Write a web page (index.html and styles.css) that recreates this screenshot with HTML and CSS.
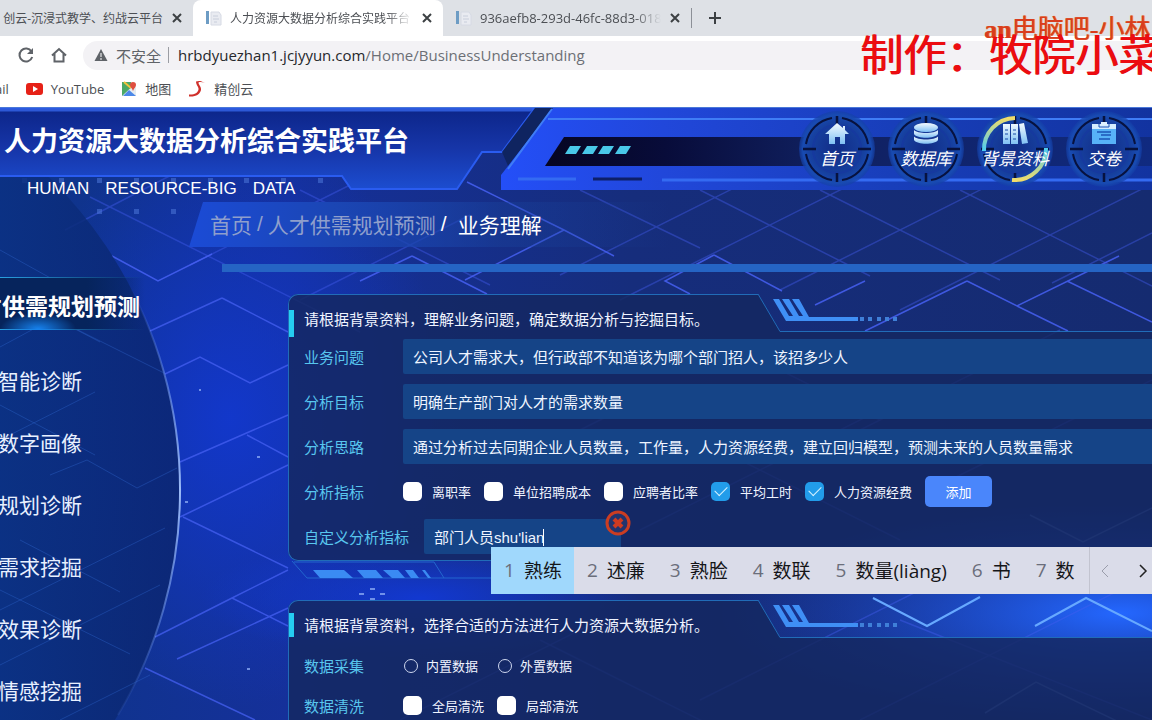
FILE: index.html
```html
<!DOCTYPE html>
<html lang="zh-CN">
<head>
<meta charset="utf-8">
<title>人力资源大数据分析综合实践平台</title>
<link rel="stylesheet" href="styles.css">
</head>
<body>
<svg class="defs" width="0" height="0" aria-hidden="true">
  <defs>
    <symbol id="close" viewBox="0 0 12 12"><path d="M2 2l8 8M10 2l-8 8" stroke="#3c4043" stroke-width="2" fill="none"/></symbol>
    <symbol id="page" viewBox="0 0 16 16"><path d="M0 1h3v13H0z" fill="#6d9cc4"/><path d="M5 2h8l2 3v10H5z" fill="#e9ebf1" stroke="#d6dae4"/><path d="M7 6h5M7 9h6M8 12h3" stroke="#c8cedb"/></symbol>
    <symbol id="target" viewBox="0 0 76 80">
      <circle cx="38" cy="40" r="38" fill="url(#disc)"/>
      <circle cx="38" cy="40" r="24" fill="none" stroke="#16399f" stroke-width="2"/>
      <g fill="none" stroke="#07123f" stroke-width="2">
        <path d="M43 9A31.500 31.500 0 0 1 69 35M69 45A31.500 31.500 0 0 1 43 71M33 71A31.500 31.500 0 0 1 7 45M7 35A31.500 31.500 0 0 1 33 9"/>
        <path d="M38 7v9M38 64v9M4 40h13M59 40h13" stroke-width="2.500"/>
      </g>
    </symbol>
    <radialGradient id="disc"><stop offset="0" stop-color="#122c86"/><stop offset=".7" stop-color="#16409f"/><stop offset=".9" stop-color="#184bb2"/><stop offset="1" stop-color="#1440a8" stop-opacity=".6"/></radialGradient>
    <linearGradient id="ice" x2="0" y2="1"><stop stop-color="#f4fbff"/><stop offset="1" stop-color="#7fc0f4"/></linearGradient>
    <linearGradient id="left" x2="0" y2="1"><stop stop-color="#0c2588"/><stop offset=".5" stop-color="#1635a8"/><stop offset="1" stop-color="#1c4dd0"/></linearGradient>
    <linearGradient id="right" gradientUnits="userSpaceOnUse" x1="501" y1="0" x2="1152" y2="0"><stop stop-color="#244ff8"/><stop offset=".25" stop-color="#2147da"/><stop offset=".6" stop-color="#183eba"/><stop offset="1" stop-color="#1233a0"/></linearGradient>
    <linearGradient id="slot" gradientUnits="userSpaceOnUse" x1="545" y1="0" x2="1152" y2="0"><stop stop-color="#060522"/><stop offset=".2" stop-color="#080c3a"/><stop offset=".45" stop-color="#10205f"/><stop offset="1" stop-color="#102a80"/></linearGradient>
    <linearGradient id="side"><stop stop-color="#0b3c91"/><stop offset=".75" stop-color="#0b3388"/><stop offset="1" stop-color="#0b256e"/></linearGradient>
    <linearGradient id="arc" x2="0" y2="1"><stop offset=".05" stop-color="#79a4ff" stop-opacity="0"/><stop offset=".5" stop-color="#9dbcf8"/><stop offset=".95" stop-color="#79a4ff" stop-opacity=".1"/></linearGradient>
    <radialGradient id="glow"><stop stop-color="#1238d0"/><stop offset="1" stop-color="#1238d0" stop-opacity="0"/></radialGradient>
    <radialGradient id="glow2"><stop stop-color="#2467ff"/><stop offset="1" stop-color="#1b4be0" stop-opacity="0"/></radialGradient>
    <linearGradient id="ring" x2="0" y2="1"><stop stop-color="#f0dc6a"/><stop offset="1" stop-color="#49cdf6"/></linearGradient>
    <linearGradient id="ring2" x2="0" y2="1"><stop stop-color="#49cdf6"/><stop offset="1" stop-color="#f0dc6a"/></linearGradient>
    <symbol id="claws" viewBox="0 0 900 40">
      <path d="M470 0l22 37.500H900" fill="none" stroke="#216cb8"/>
      <path d="M485 5h6l10 17h4L494 5h7l10 17h4L504 5h7l10 18h49v4h-72z" fill="#3f8ff5"/>
      <path d="M572 23h4v4h-4zM580 23h4v4h-4zM589 23h4v4h-4zM597 23h4v4h-4zM605 23h4v4h-4z" fill="#3f7fd8"/>
    </symbol>
  </defs>
</svg>

<div class="browser">
  <div class="tabs">
    <div class="tab tab-first"><span class="tab-name">创云-沉浸式教学、约战云平台</span><button aria-label="关闭标签页"><svg width="12" height="12"><use href="#close"/></svg></button></div>
    <div class="tab tab-active"><svg width="16" height="16"><use href="#page"/></svg><span class="tab-name fade">人力资源大数据分析综合实践平台</span><button aria-label="关闭标签页"><svg width="12" height="12"><use href="#close"/></svg></button></div>
    <div class="tab tab-last"><svg width="16" height="16"><use href="#page"/></svg><span class="tab-name fade latin">936aefb8-293d-46fc-88d3-018</span><button aria-label="关闭标签页"><svg width="12" height="12"><use href="#close"/></svg></button></div>
    <button class="new-tab" aria-label="新标签页"><svg width="14" height="14"><path d="M7 1v12M1 7h12" stroke="#3c4043" stroke-width="2"/></svg></button>
  </div>
  <div class="toolbar">
    <button aria-label="重新加载"><svg width="18" height="18" viewBox="0 0 18 18"><path d="M14.500 5.500A6.500 6.500 0 1 0 15.200 11" fill="none" stroke="#5f6368" stroke-width="2"/><path d="M16 2v6h-6z" fill="#5f6368"/></svg></button>
    <button aria-label="主页"><svg width="18" height="18" viewBox="0 0 18 18"><path d="M2 9.500L9 3l7 6.500M4.500 8v7.500h9V8" fill="none" stroke="#5f6368" stroke-width="2"/></svg></button>
    <div class="address">
      <svg width="14" height="14" viewBox="0 0 14 14"><path d="M7 1l6.500 12H.5z" fill="#5f6368"/><path d="M7 5v4M7 10v2" stroke="#fff" stroke-width="1"/></svg>
      <span class="unsafe">不安全</span><span class="bar"></span>
      <span class="url"><b>hrbdyuezhan1.jcjyyun.com</b>/Home/BusinessUnderstanding</span>
    </div>
  </div>
  <div class="bookmarks">
    <a href="#" class="mail">ail</a>
    <a href="#"><svg width="17" height="14" viewBox="0 0 17 14"><rect y="1" width="17" height="12" rx="3" fill="#e62117"/><path d="M7 4l5 3-5 3z" fill="#fff"/></svg>YouTube</a>
    <a href="#"><svg width="16" height="16" viewBox="0 0 16 16"><path d="M1 1h9v14H1z" fill="#4aa866"/><path d="M1 15L15 2v13z" fill="#e5ebf0"/><path d="M2 15l6-6 7 6z" fill="#4c88e8"/><path d="M3 1l7 6" stroke="#f3c13c" stroke-width="2"/><path d="M12 10C11 7 9 6 9 4a3 3 0 0 1 6 0c0 2-2 3-3 6z" fill="#df4e3f"/></svg>地图</a>
    <a href="#"><svg width="18" height="18" viewBox="0 0 18 18"><path d="M1 14.500c5 .5 9-1.500 9.500-5C11 7 8 5 8 1.500c2.500-1 5-1 9 1.500-3-1-5-1.200-6.500-.5C10.500 5 13.500 6.500 13 10c-.8 4-5 7-12 6.500z" fill="#d0302b"/></svg>精创云</a>
  </div>
</div>

<div class="app">
  <svg class="scene" viewBox="0 0 1152 612" preserveAspectRatio="xMinYMin slice" aria-hidden="true">
    <ellipse cx="230" cy="310" rx="220" ry="290" fill="url(#glow)" opacity=".9"/>
    <ellipse cx="1120" cy="505" rx="400" ry="110" fill="url(#glow2)"/>
    <ellipse cx="420" cy="490" rx="220" ry="60" fill="url(#glow)"/>
    <g transform="translate(0 -108)" fill="none" stroke="#4660f2" stroke-width="1.500">
      <g opacity=".4"><path d="M90 197L360 332M65 230l120-62M190 265l140-70 100-50M300 190l190 95M300 300l170-85M580 190l120 58M700 190l170 86M820 190l180 90M560 275l220-110M620 300l300-150M780 290l260-130M960 190l192 96M900 310l252-126M1152 233l-100 50M720 340l160 80M520 460l120-60M640 530l260-130M700 440l200 100M860 430l200-100M950 480l202-100M900 620l252 100M700 700l280-140M540 640l240 120M400 720l200-100M860 720l292-146"/></g>
      <g opacity=".85"><path d="M112 256l46 25 54-27M467 182l97 48 50 26M564 230l-99 50M412 256l-52 25M412 256l75 38M714 255l-49 26 25 13M714 255l68 36M967 281l-102 50M865 281l-50 24M967 281l50 25 102-50M1067 281l85 41M1017 306l51 25"/></g>
      <path d="M150 331l72-33M165 374l35-17 50 26 38-18M222 298l66 34M180 462l108-47M247 435l41 22M180 517l108-52M183 517l105 51M155 637l77-39 56-28M232 598l56 28M145 668l110 52M177 659l111-51" opacity=".75"/>
      <path d="M873 598l54 28 53-29M1035 626l51-28 66 33" stroke="#67a9ff" stroke-width="2"/>
      <path d="M985 713l51-31 116 56M1030 515l53 27 69-34" stroke="#587ad0" opacity=".7"/>
    </g>
    <g transform="translate(0 -108)" fill="#4d77d8" opacity=".55"><path d="M22 178h5v5h-5zM59 178h5v5h-5zM97 178h5v5h-5zM134 178h5v5h-5zM171 178h5v5h-5zM208 178h5v5h-5zM244 178h5v5h-5zM281 178h5v5h-5zM318 178h5v5h-5zM97 209h5v5h-5zM134 209h5v5h-5zM171 209h5v5h-5z"/></g>
    <circle cx="-259" cy="382" r="439" fill="url(#side)" opacity=".85"/>
    <path d="M118 157A439 439 0 0 1 118 607" fill="none" stroke="url(#arc)" stroke-width="2"/>
    <g transform="translate(0 -108)" fill="none" stroke="#356cd8" opacity=".35"><path d="M0 347l54-29 110 55M54 318l46 24M0 405l95 50M0 440l95-48M50 475l37-15 50 28 40-20M0 610l165-82M0 665l160-80M20 540l100 52M60 720l90-45M0 590l130 64M0 250l90 50"/></g>
    <g fill="#88a7f2" opacity=".8"><path d="M257 348h3v2h-3zM199 281h2v2h-2zM247 560h3v2h-3zM185 393h3v2h-3zM359 485h5v2h-5zM380 485h5v2h-5zM370 480h5v2h-5zM370 490h5v2h-5z"/></g>
  </svg>

  <header class="banner">
    <svg class="banner-art" viewBox="0 0 2400 84" width="2400" height="84" aria-hidden="true">
      <path d="M0 0h535l-33 44h-20l-25 37H351l-9-13H0z" fill="url(#left)"/>
      <path d="M0 1h534l-32 43h-20l-25 37H351l-9-13H0" fill="none" stroke="#2a5cf0" stroke-width="2"/><path d="M0 2h532" stroke="#2d58d6" stroke-width="3"/>
      <path d="M535 0h18l-44 60-7-16z" fill="#0f2460"/>
      <path d="M553 0H2400v82H501V67z" fill="url(#right)"/>
      <path d="M552 1l-44 60M548 11H2400" fill="none" stroke="#3f7df6" stroke-width="2"/>
      <path d="M564 29H2400v29H545z" fill="url(#slot)"/>
      <path d="M570 38h11l-5 8h-11zM587 38h11l-5 8h-11zM603 38h11l-5 8h-11zM620 38h11l-5 8h-11z" fill="#49c8e8"/>
      <path d="M518 71h58M662 72H2400" stroke="#346bf2" stroke-width="3"/><path d="M593 71h49" stroke="#0d1f68" stroke-width="3"/>
    </svg>
    <div class="brand"><h1>人力资源大数据分析综合实践平台</h1><p><span>HUMAN</span><span>RESOURCE-BIG</span><span>DATA</span></p></div>
    <nav class="dials">
      <a href="#"><svg class="dial" width="76" height="80"><use href="#target"/></svg><svg class="glyph" width="26" height="24" viewBox="0 0 26 24"><path d="M13 1L1 12h4v10h6v-7h5v7h5V12h4l-4-4V4h-2v2z" fill="url(#ice)"/></svg><span>首页</span></a>
      <a href="#"><svg class="dial" width="76" height="80"><use href="#target"/></svg><svg class="glyph" width="26" height="24" viewBox="0 0 26 24"><g fill="url(#ice)"><ellipse cx="13" cy="5.500" rx="12" ry="4.500"/><path d="M1 8c3 4 21 4 24 0v4c-3 5-21 5-24 0z"/><path d="M1 14.500c3 4 21 4 24 0V18c-3 5-21 5-24 0z"/></g></svg><span>数据库</span></a>
      <a href="#"><svg class="dial" width="76" height="80"><use href="#target"/><path d="M7 42A31.500 31.500 0 0 1 38 9" fill="none" stroke="url(#ring)" stroke-width="4"/><path d="M69 39A31.500 31.500 0 0 1 35 71" fill="none" stroke="url(#ring2)" stroke-width="4"/></svg><svg class="glyph" width="26" height="24" viewBox="0 0 26 24"><path d="M1 2h7v20H1zM9 2h7v20H9zM17 2l5-1 4 20-6 1z" fill="url(#ice)"/><path d="M3 8h3M3 12h3M3 17h3M11 8h3M11 12h3M11 17h3" stroke="#174aa8"/></svg><span>背景资料</span></a>
      <a href="#"><svg class="dial" width="76" height="80"><use href="#target"/></svg><svg class="glyph" width="26" height="24" viewBox="0 0 26 24"><path d="M1 2h24v20H1z" fill="#57b2f8"/><path d="M1 2h24v5H1z" fill="#d4edff"/><path d="M8 2v3h10V2" fill="none" stroke="#1d55b8"/><path d="M10 0h6v3h-6z" fill="#dff2ff"/><path d="M6 10h14M10 13h10M8 17h11" stroke="#1d55b8" stroke-width="1.500"/></svg><span>交卷</span></a>
    </nav>
  </header>

  <nav class="crumbs"><a href="#">首页</a><i>/</i><a href="#">人才供需规划预测</a><i class="on">/</i><span>业务理解</span></nav>
  <div class="rule"></div>

  <div class="columns">
    <nav class="menu">
      <a class="current" href="#"><span>才供需规划预测</span></a>
      <a href="#">智能诊断</a><a href="#">数字画像</a><a href="#">规划诊断</a><a href="#">需求挖掘</a><a href="#">效果诊断</a><a href="#">情感挖掘</a>
    </nav>

    <main>
      <section class="panel panel-top">
        <svg class="claw" width="900" height="40"><use href="#claws"/></svg><div class="edge"></div>
        <svg class="foot" width="900" height="18" viewBox="0 0 900 18"><path d="M4 0l15 17H900M6 1h140l10 16" fill="none" stroke="#2367ce"/><path d="M25 9h31l9 8H32zM69 9h19l7 8H76zM95 9h15l7 8h-13zM117 9h8l6 8h-8zM134 9h3l6 8h-3z" fill="#3a8bf3"/></svg>
        <h2>请根据背景资料，理解业务问题，确定数据分析与挖掘目标。</h2>
        <div class="rows">
          <div class="row"><label for="q1">业务问题</label><input id="q1" class="field" value="公司人才需求大，但行政部不知道该为哪个部门招人，该招多少人"></div>
          <div class="row"><label for="q2">分析目标</label><input id="q2" class="field" value="明确生产部门对人才的需求数量"></div>
          <div class="row"><label for="q3">分析思路</label><input id="q3" class="field" value="通过分析过去同期企业人员数量，工作量，人力资源经费，建立回归模型，预测未来的人员数量需求"></div>
          <div class="row"><span class="name">分析指标</span>
            <div class="choices">
              <label><input type="checkbox">离职率</label>
              <label><input type="checkbox">单位招聘成本</label>
              <label><input type="checkbox">应聘者比率</label>
              <label><input type="checkbox" checked>平均工时</label>
              <label><input type="checkbox" checked>人力资源经费</label>
              <button class="add">添加</button>
            </div>
          </div>
          <div class="row custom"><label for="q5">自定义分析指标</label>
            <div class="entry">
              <input id="q5" class="field" value="部门人员shu'lian"><span class="caret"></span>
              <button class="remove" aria-label="删除"><svg width="26" height="26" viewBox="0 0 26 26"><circle cx="13" cy="13" r="11" fill="#22346e" stroke="#cb3d22" stroke-width="3"/><path d="M9 9l8 8M17 9l-8 8" stroke="#cf3a20" stroke-width="4"/></svg></button>
              <div class="ime">
                <ol><li class="picked"><i>1</i>熟练</li><li><i>2</i>述廉</li><li><i>3</i>熟脸</li><li><i>4</i>数联</li><li><i>5</i>数量(liàng)</li><li><i>6</i>书</li><li><i>7</i>数</li></ol>
                <div class="pager"><button aria-label="上一页"><svg width="10" height="14"><path d="M8 1L2 7l6 6" fill="none" stroke="#9a9dab" stroke-width="1"/></svg></button><button aria-label="下一页"><svg width="10" height="14"><path d="M2 1l6 6-6 6" fill="none" stroke="#222" stroke-width="1.500"/></svg></button></div>
              </div>
            </div>
          </div>
        </div>
      </section>

      <section class="panel panel-next">
        <svg class="claw" width="900" height="40"><use href="#claws"/></svg><div class="edge"></div>
        <h2>请根据背景资料，选择合适的方法进行人力资源大数据分析。</h2>
        <div class="rows tight">
          <div class="row"><span class="name">数据采集</span>
            <div class="choices radios"><label><input type="radio" name="source">内置数据</label><label><input type="radio" name="source">外置数据</label></div>
          </div>
          <div class="row"><span class="name">数据清洗</span>
            <div class="choices"><label><input type="checkbox">全局清洗</label><label><input type="checkbox">局部清洗</label></div>
          </div>
        </div>
      </section>
    </main>
  </div>
</div>

<div class="marks"><p class="mark-small"><b>an</b>电脑吧-小林</p><p class="mark-large">制作：牧院小菜</p></div>
</body>
</html>
```
FILE: styles.css
```css
* { box-sizing: border-box; }
body {
  margin: 0;
  display: flex;
  flex-direction: column;
  position: relative;
  height: 100vh;
  overflow: hidden;
  font-family: "Liberation Sans", "Noto Sans CJK SC", sans-serif;
  font-size: 15px;
  color: #e6eeff;
  background: #14296b;
}
a { color: inherit; text-decoration: none; }
button { border: 0; padding: 0; background: none; display: inline-flex; align-items: center; justify-content: center; font: inherit; }
i { font-style: normal; }
h1, h2, p, ol { margin: 0; padding: 0; }
svg { flex: none; display: block; }
.defs { position: absolute; }

/* browser chrome */
.browser { flex: none; background: #fff; color: #4c4f54; font-family: "Open Sans", "Noto Sans CJK SC", sans-serif; border-bottom: 1px solid #4a78d8; }
.tabs { display: flex; height: 36px; background: #dee1e6; }
.tab { display: flex; align-items: center; gap: 8px; padding: 0 10px 0 13px; height: 36px; width: 250px; font-size: 12px; }
.tab-first { width: 193px; padding-left: 0; justify-content: flex-end; }
.tab-first .tab-name { flex: none; }
.tab-active { background: #fff; border-radius: 8px 8px 0 0; }
.tab-last { width: 249px; border-right: 1px solid #8c9097; height: 20px; margin-top: 8px; }
.tab-name { flex: 1; white-space: nowrap; overflow: hidden; }
.latin { font-size: 13px; }
.fade { -webkit-mask-image: linear-gradient(90deg, #000 85%, transparent); mask-image: linear-gradient(90deg, #000 85%, transparent); }
.new-tab { width: 46px; }
.toolbar { display: flex; align-items: center; height: 38px; padding-left: 17px; gap: 15px; }
.address { flex: 1; display: flex; align-items: center; height: 29px; padding-left: 11px; border-radius: 15px 0 0 15px; background: #f3f2f5; font-size: 15px; }
.unsafe { margin-left: 8px; color: #5f6368; }
.bar { width: 1px; height: 16px; margin: 0 9px 0 7px; background: #9b9da3; }
.url { color: #6c6f75; }
.url b { font-weight: 400; color: #26282c; }
.bookmarks { display: flex; align-items: center; gap: 17px; height: 33px; padding-bottom: 4px; font-size: 13px; }
.bookmarks a { display: flex; align-items: center; gap: 8px; }
.mail { margin-left: -5px; }

/* application */
.app { flex: 1; position: relative; overflow: hidden; background: linear-gradient(90deg, #0d3588 0, #15309a 25%, #162d7c 55%, #152b70 100%); }
.scene { position: absolute; inset: 0; width: 100%; height: 100%; }
.banner { position: relative; display: flex; justify-content: space-between; height: 94px; }
.banner-art { position: absolute; top: 0; left: 0; }
.brand { position: relative; padding: 14px 0 0 4px; color: #fff; }
.brand h1 { font-size: 27px; line-height: 40px; font-weight: 700; white-space: nowrap; }
.brand p { display: flex; gap: 16px; padding: 17px 0 0 23px; font-size: 17px; line-height: 20px; }
.dials { position: relative; display: flex; gap: 13px; padding: 1px 10px 0 0; }
.dials a { position: relative; width: 76px; height: 80px; display: flex; flex-direction: column; align-items: center; padding-top: 13px; color: #fff; font-size: 17px; font-style: italic; line-height: 28px; }
.dial { position: absolute; inset: 0; }
.glyph, .dials span { position: relative; white-space: nowrap; }
.crumbs { position: relative; display: flex; align-items: center; height: 45px; margin-left: 189px; width: 480px; padding: 0 0 2px 21px; font-size: 21px; color: #8f9fcc; background: linear-gradient(90deg, #1b4bd6 0, #1b46b4 30%, #1a439c66 65%, transparent); clip-path: polygon(14px 0, 100% 0, 100% 100%, 0 100%); }
.crumbs i { padding: 0 5px; }
.crumbs .on { padding-right: 11px; }
.crumbs .on, .crumbs span { color: #fff; }
.rule { position: relative; height: 8px; margin: 17px 0 0 222px; background: #2564c4; }
.columns { position: relative; display: flex; margin-top: 5px; }

.menu { flex: none; width: 288px; display: flex; flex-direction: column; font-size: 21px; color: #e8f0ff; }
.menu a { height: 62px; line-height: 62px; margin-left: -2px; white-space: nowrap; }
.menu .current { position: relative; height: 53px; line-height: 60px; margin: 0 0 21px; width: 145px; font-size: 23px; font-weight: 700; color: #fff; background: radial-gradient(ellipse 38px 16px at 38px 52px, #1682ee, transparent), linear-gradient(90deg, #2aa0e0, #2aa0e000) 0 0 / 100% 1px no-repeat, linear-gradient(90deg, #2aa0e0, #2aa0e000) 0 100% / 100% 1px no-repeat, linear-gradient(90deg, #06245c 60%, #06245c00); }
.current span { margin-left: -21px; }

main { flex: 1; min-width: 0; padding-top: 17px; display: flex; flex-direction: column; gap: 39px; }
.panel { position: relative; padding: 16px 0 7px 16px; }
.panel-top { z-index: 1; }
.panel::before { content: ""; position: absolute; inset: 0; border-radius: 10px 0 0 10px; background: #142860d4; clip-path: polygon(0 0, 470px 0, 492px 37px, 100% 37px, 100% 100%, 0 100%); }
.edge { position: absolute; inset: 0; border: solid #216cb8; border-width: 1px 0 1px 1px; border-radius: 10px 0 0 10px; clip-path: polygon(0 0, 470px 0, 470px 20px, 100% 20px, 100% 100%, 0 100%); }
.claw { position: absolute; top: 0; left: 0; }
.foot { position: absolute; top: 100%; left: 0; }
.panel h2 { position: relative; font-size: 15px; line-height: 20px; font-weight: 400; color: #f0f4ff; }
.panel h2::before { content: ""; position: absolute; left: -15px; top: 0; width: 5px; height: 27px; background: #25cdf2; }
.panel-next h2::before { top: -3px; height: 24px; }
.rows { position: relative; display: grid; gap: 10px; padding-top: 9px; }
.tight { gap: 5px; padding-top: 12px; }
.row { display: grid; grid-template-columns: 99px 1fr; align-items: center; height: 35px; }
.row > label, .name { color: #58c6ee; }
.field { width: 100%; height: 35px; border: 0; border-radius: 2px 0 0 2px; padding: 0 10px; background: #154487; color: #eef4ff; font: inherit; }
.choices { display: flex; align-items: center; gap: 13px; font-size: 13px; color: #f0f4ff; }
.choices label { display: flex; align-items: center; gap: 10px; white-space: nowrap; }
.choices input { appearance: none; flex: none; width: 19px; height: 19px; margin: 0; border-radius: 5px; background: #fff; }
.choices input:checked { display: grid; place-items: center; background: #229cea; }
.choices input:checked::before { content: ""; width: 11px; height: 6px; margin-bottom: 4px; border: solid #d4f1ff; border-width: 0 0 1px 1px; transform: rotate(-45deg); }
.radios { gap: 20px; padding-left: 1px; }
.radios label { gap: 8px; }
.radios input { width: 14px; height: 14px; border: 1px solid #cdd6ee; border-radius: 50%; background: none; }
.add { width: 67px; height: 31px; border-radius: 5px; background: #4a86fb; color: #fff; }
.custom { grid-template-columns: 120px 1fr; white-space: nowrap; }
.entry { position: relative; }
.entry .field { width: 197px; }
.caret { position: absolute; left: 119px; top: 10px; width: 1px; height: 17px; background: #fff; }
.remove { position: absolute; left: 181px; top: -9px; }

.ime { position: absolute; left: 67px; top: 28px; right: 0; height: 47px; display: flex; overflow: hidden; background: #dadce9; color: #151619; font-family: "Open Sans", "Noto Sans CJK SC", sans-serif; font-size: 19px; }
.ime ol { display: flex; list-style: none; }
.ime li { display: flex; align-items: center; gap: 9px; padding: 0 12px 2px 13px; }
.ime li i { color: #6b6e7b; }
.ime .picked { background: #a0d8fc; }
.pager { display: flex; flex: none; gap: 28px; margin-left: auto; padding: 0 4px 0 10px; border-left: 1px solid #c2c4d0; }

/* watermark over the recording */
.marks { position: absolute; top: 0; right: 0; width: 292px; height: 90px; overflow: hidden; white-space: nowrap; pointer-events: none; }
.mark-small { position: absolute; left: 124px; top: 12px; font: 26px/36px "Liberation Serif", "Noto Sans CJK SC", serif; color: #d93c20; text-shadow: 1px 0 #f08a30; }
.mark-large { position: absolute; left: 0; top: 22px; font: 43px/60px "Noto Sans CJK SC", sans-serif; color: #ec0c10; text-shadow: 1px 0 #d80c10; }
```
